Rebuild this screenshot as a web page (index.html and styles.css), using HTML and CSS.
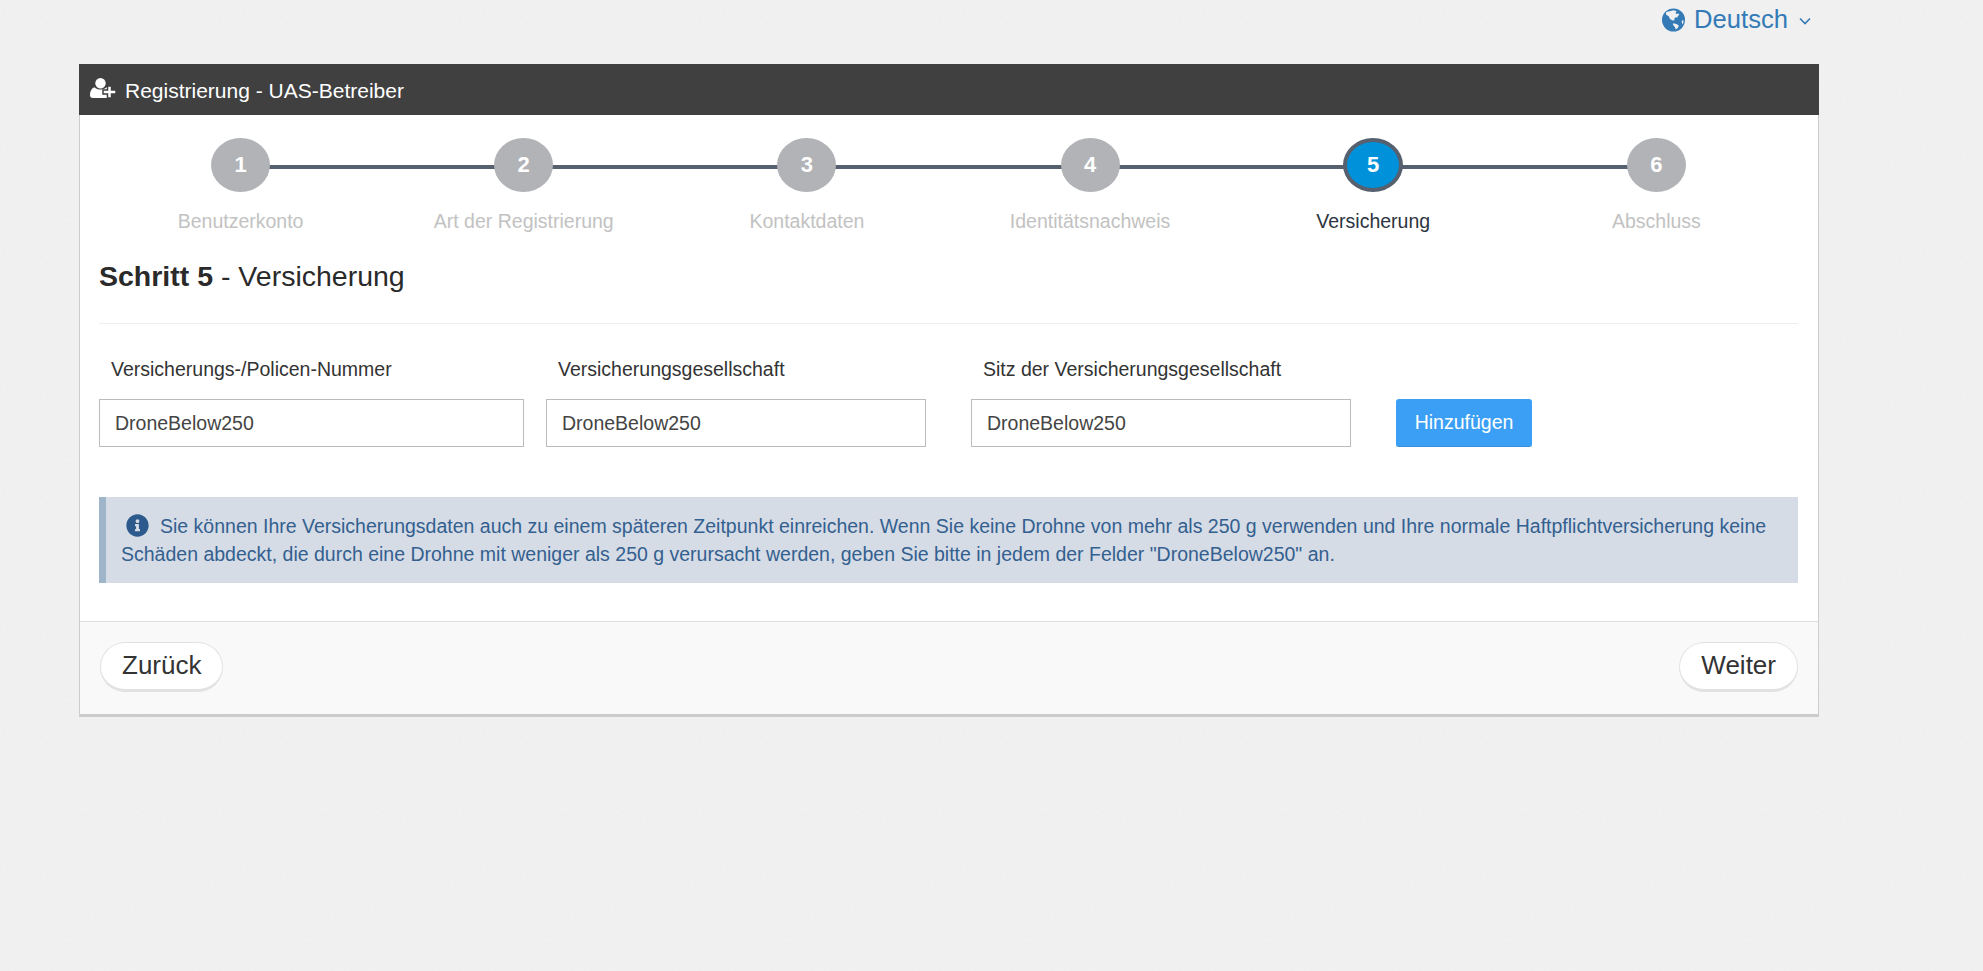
FILE: index.html
```html
<!DOCTYPE html>
<html lang="de">
<head>
<meta charset="utf-8">
<title>Registrierung - UAS-Betreiber</title>
<link rel="stylesheet" href="styles.css">
</head>
<body>
<div class="topbar">
  <a class="lang">
    <svg class="globe" viewBox="0 0 24 24"><circle cx="12" cy="12" r="12" fill="#337ab7"/><path fill="#f0f0f0" d="M5.500 3.500 9 2.500l3-.6 3.500 1-1.500 1.600 1 1.200 2-.6 1.200 1.400-1.700 1.200-.5 2-1.600-.6-1.600 1.400.4 1.800-2.400.2-2.600-1.800-1.200-2.600-2.600-1.500-.4-2.300z"/><path fill="#f0f0f0" d="M11.500 15.500l3.500.6 2.500 1.600-.8 2.400-2.400 1.800-.8-2.600-1.800-1.800zM20.500 13l1.700-1 .3 2.400-1.300 2.200z"/></svg>
    <span>Deutsch</span>
    <svg class="chev" viewBox="0 0 12 8"><path d="M1 1.500 6 6.500l5-5" fill="none" stroke="#337ab7" stroke-width="1.600"/></svg>
  </a>
</div>
<main class="panel">
  <header class="panel-head">
    <svg class="user-plus" viewBox="0 0 26 20"><circle cx="10.500" cy="5.200" r="5.200" fill="#fff"/><path fill="#fff" d="M4.500 9.200c1.500 1.500 3.500 2.400 6 2.400s4.500-.9 6-2.400c2.500.6 3.500 3 3.800 6.800V20H3c-2 0-3-1-3-2.800 0-3.700 1.500-7.200 4.500-8z"/><path fill="#fff" stroke="#404040" stroke-width="1.500" d="M17.500 8h4v4H26v4h-4.500v4h-4v-4H13v-4h4.500z"/></svg>
    <span>Registrierung - UAS-Betreiber</span>
  </header>
  <div class="panel-body">
    <ol class="steps">
      <li class="step"><span class="dot">1</span><span class="step-label">Benutzerkonto</span></li>
      <li class="step"><span class="dot">2</span><span class="step-label">Art der Registrierung</span></li>
      <li class="step"><span class="dot">3</span><span class="step-label">Kontaktdaten</span></li>
      <li class="step"><span class="dot">4</span><span class="step-label">Identitätsnachweis</span></li>
      <li class="step is-active"><span class="dot">5</span><span class="step-label">Versicherung</span></li>
      <li class="step"><span class="dot">6</span><span class="step-label">Abschluss</span></li>
    </ol>
    <h2 class="title"><b>Schritt 5</b> - Versicherung</h2>
    <hr class="rule">
    <form class="fields">
      <div class="field f1"><label>Versicherungs-/Policen-Nummer</label><input type="text" value="DroneBelow250"></div>
      <div class="field f2"><label>Versicherungsgesellschaft</label><input type="text" value="DroneBelow250"></div>
      <div class="field f3"><label>Sitz der Versicherungsgesellschaft</label><input type="text" value="DroneBelow250"></div>
      <button type="button" class="add">Hinzufügen</button>
    </form>
    <div class="alert">
      <svg class="info" viewBox="0 0 512 512"><path fill="#2c5a8c" d="M256 8C119.043 8 8 119.083 8 256c0 136.997 111.043 248 248 248s248-111.003 248-248C504 119.083 392.957 8 256 8zm0 110c23.196 0 42 18.804 42 42s-18.804 42-42 42-42-18.804-42-42 18.804-42 42-42zm56 254c0 6.627-5.373 12-12 12h-88c-6.627 0-12-5.373-12-12v-24c0-6.627 5.373-12 12-12h12v-64h-12c-6.627 0-12-5.373-12-12v-24c0-6.627 5.373-12 12-12h64c6.627 0 12 5.373 12 12v100h12c6.627 0 12 5.373 12 12v24z"/></svg>Sie können Ihre Versicherungsdaten auch zu einem späteren Zeitpunkt einreichen. Wenn Sie keine Drohne von mehr als 250 g verwenden und Ihre normale Haftpflichtversicherung keine Schäden abdeckt, die durch eine Drohne mit weniger als 250 g verursacht werden, geben Sie bitte in jedem der Felder "DroneBelow250" an.
    </div>
  </div>
  <footer class="panel-foot">
    <button type="button" class="pill">Zurück</button>
    <button type="button" class="pill">Weiter</button>
  </footer>
</main>
</body>
</html>
```
FILE: styles.css
```css
* { box-sizing: border-box; }
html, body { margin: 0; height: 100%; }
body {
  background-color: #efefef;
  background-image: url("data:image/svg+xml,%3Csvg xmlns='http://www.w3.org/2000/svg' width='240' height='240'%3E%3Cfilter id='n'%3E%3CfeTurbulence type='fractalNoise' baseFrequency='.35' numOctaves='2' stitchTiles='stitch'/%3E%3CfeColorMatrix values='0 0 0 0 1 0 0 0 0 1 0 0 0 0 1 .5 0 0 0 -.1'/%3E%3C/filter%3E%3Crect width='240' height='240' filter='url(%23n)' opacity='.45'/%3E%3C/svg%3E");
  font-family: "Liberation Sans", Arial, sans-serif;
  color: #333;
  overflow: hidden;
}
.topbar {
  height: 64px;
  width: 1819px;
  display: flex;
  justify-content: flex-end;
  padding: 4px 0 0;
}
.lang {
  display: flex;
  align-items: center;
  height: 30px;
  color: #337ab7;
  font-size: 25.600px;
  margin-right: 8px;
}
.globe { width: 23px; height: 24px; margin-right: 9px; margin-top: 2px; }
.chev { width: 12px; height: 8px; margin-left: 11px; margin-top: 3px; }
.panel {
  width: 1740px;
  margin-left: 79px;
  height: 653px;
  background: #fff;
  border: 1px solid #ccc;
  border-top: 0;
  border-bottom: 3px solid #ccc;
  display: flex;
  flex-direction: column;
}
.panel-head {
  height: 51px;
  margin: 0 -1px;
  background: #404040;
  color: #fff;
  font-size: 21px;
  display: flex;
  align-items: center;
  padding: 2px 0 0 11px;
}
.user-plus { width: 26px; height: 20px; margin-right: 9px; margin-top: -5px; }
.panel-body { flex: 1; padding: 23px 20px 0 19px; }
.steps {
  list-style: none;
  margin: 0;
  padding: 0;
  display: grid;
  grid-template-columns: repeat(6, 1fr);
}
.step {
  display: flex;
  flex-direction: column;
  align-items: center;
  position: relative;
}
.step:not(:last-child)::after {
  content: "";
  position: absolute;
  top: 27px;
  left: 50%;
  width: 100%;
  height: 4px;
  background: #56606e;
}
.dot {
  position: relative;
  z-index: 1;
  width: 59px;
  height: 54px;
  border-radius: 50%;
  background: #b1b3b6;
  color: #fff;
  font-weight: 700;
  font-size: 22px;
  display: flex;
  align-items: center;
  justify-content: center;
}
.step-label {
  margin-top: 17px;
  font-size: 19.500px;
  line-height: 24px;
  color: #c2c2c2;
}
.is-active .dot { width: 60px; background: #0091db; border: 4px solid #56606e; }
.is-active .step-label { color: #2c3540; }
.title {
  margin: 25px 0 0;
  font-size: 28.500px;
  line-height: 36px;
  font-weight: 400;
  color: #2a2a2a;
}
.rule { border: 0; border-top: 1px solid #eee; margin: 29px 0 0; }
.fields {
  display: flex;
  align-items: flex-end;
  margin-top: 33px;
  height: 90px;
}
.field { display: flex; flex-direction: column; }
.field label { font-size: 19.500px; line-height: 24px; color: #333; padding-left: 12px; margin-bottom: 18px; }
.field input {
  height: 48px;
  width: 100%;
  border: 1px solid #bbb;
  border-radius: 0;
  padding: 0 15px;
  font: 19.500px "Liberation Sans", Arial, sans-serif;
  color: #444;
  background: #fff;
  outline: 0;
}
.f1 { width: 425px; margin-right: 22px; }
.f2 { width: 380px; margin-right: 45px; }
.f3 { width: 380px; margin-right: 45px; }
.add {
  width: 136px;
  height: 48px;
  background: #3a9ff5;
  border: 0;
  border-bottom: 1px solid #3490dd;
  border-radius: 3px;
  color: #fff;
  font: 19.500px "Liberation Sans", Arial, sans-serif;
  padding: 0 0 1px;
}
.alert {
  margin-top: 50px;
  height: 86px;
  background: #d6dce6;
  border-left: 7px solid #9fb6ca;
  padding: 15px 20px 0 15px;
  font-size: 19.500px;
  line-height: 28px;
  color: #33608f;
}
.info { width: 23px; height: 23px; vertical-align: -4px; margin: 0 11px 0 5px; }
.panel-foot {
  height: 93px;
  background: #f9f9f9;
  border-top: 1px solid #ddd;
  display: flex;
  justify-content: space-between;
  align-items: flex-start;
  padding: 20px 20px 0 20px;
}
.pill {
  height: 50px;
  padding: 0 21px 2px;
  background: #fff;
  border: 1px solid #e2e2e2;
  border-bottom: 3px solid #e2e2e2;
  border-radius: 25px;
  font: 26px "Liberation Sans", Arial, sans-serif;
  color: #333;
}
```
